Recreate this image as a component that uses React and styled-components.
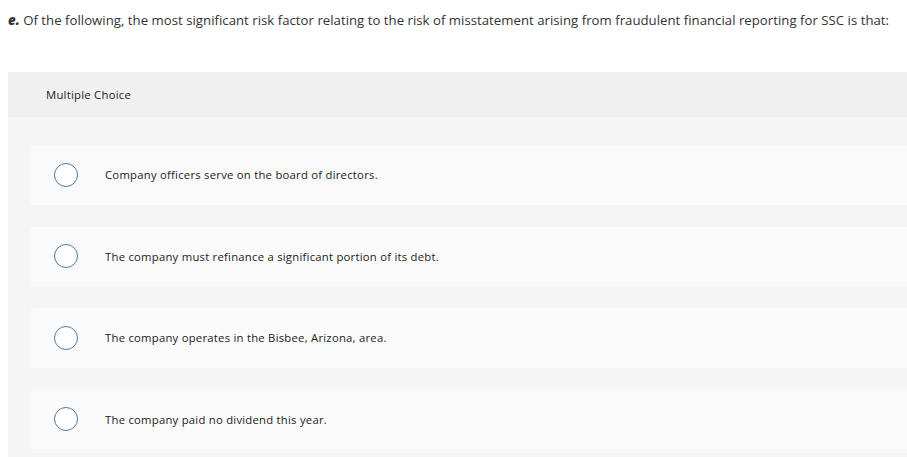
import React from "react";
import styled, { createGlobalStyle } from "styled-components";

const Global = createGlobalStyle`
  html, body { margin: 0; padding: 0; background: #fff; overflow: hidden; }
  body { font-family: "Open Sans", "Liberation Sans", sans-serif; color: #333; }
`;

const Page = styled.div`
  padding: 12px 0 0 8px;
`;

const Question = styled.p`
  margin: 0;
  font-size: 13.2px;
  line-height: 16px;
  color: #333;
  white-space: nowrap;
  letter-spacing: 0.02px;
  b { font-style: italic; font-weight: 800; }
`;

const Panel = styled.div`
  margin-top: 44px;
  background: #f5f5f5;
  padding-bottom: 10px;
`;

const PanelHeader = styled.div`
  background: #f0f0f0;
  height: 45px;
  display: flex;
  align-items: center;
  padding-left: 38px;
  font-size: 11.3px;
  color: #222;
  letter-spacing: 0.25px;
`;

const Options = styled.div`
  display: flex;
  flex-direction: column;
  gap: 22px;
  padding: 28px 0 0 23px;
`;

const Option = styled.label`
  display: flex;
  align-items: center;
  height: 59.5px;
  background: #fafafa;
  border-radius: 3px 0 0 3px;
  padding-left: 23px;
  font-size: 11.3px;
  color: #222;
  letter-spacing: 0.24px;
  cursor: pointer;
`;

const Radio = styled.span`
  width: 22px;
  height: 22px;
  border: 1.6px solid #4f77a3;
  border-radius: 50%;
  background: #fff;
  flex: none;
  margin-right: 27px;
`;

const options = [
  "Company officers serve on the board of directors.",
  "The company must refinance a significant portion of its debt.",
  "The company operates in the Bisbee, Arizona, area.",
  "The company paid no dividend this year.",
];

export default function App() {
  return (
    <>
      <Global />
      <Page>
        <Question>
          <b>e.</b> Of the following, the most significant risk factor relating to the risk of misstatement arising from fraudulent financial reporting for SSC is that:
        </Question>
        <Panel>
          <PanelHeader>Multiple Choice</PanelHeader>
          <Options>
            {options.map((o) => (
              <Option key={o}>
                <Radio />
                {o}
              </Option>
            ))}
          </Options>
        </Panel>
      </Page>
    </>
  );
}
